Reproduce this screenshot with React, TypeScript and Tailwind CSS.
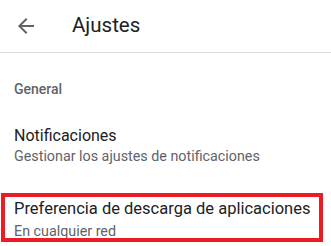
export default function App() {
  return (
    <div className="w-[331px] h-[246px] bg-white overflow-hidden relative" style={{ fontFamily: "Roboto, 'Liberation Sans', sans-serif" }}>
      <div className="h-[53px] flex items-center border-b border-[#dadce0]">
        <button className="ml-[14px] w-6 h-6 flex items-center justify-center text-[#5f6368]">
          <svg width="24" height="24" viewBox="0 0 24 24" fill="currentColor">
            <path d="M20 11H7.83l5.59-5.59L12 4l-8 8 8 8 1.41-1.41L7.83 13H20v-2z" />
          </svg>
        </button>
        <h1 className="ml-[34px] text-[20.5px] leading-[28px] text-[#202124] -mt-[2px]">Ajustes</h1>
      </div>

      <div className="px-[14px] pt-[26px] text-[14px] leading-[20px] font-medium text-[#5f6368]">General</div>

      <div className="px-[14px] pt-[27px]">
        <div className="text-[16px] leading-[20px] text-[#202124]">Notificaciones</div>
        <div className="text-[14.3px] leading-[18px] text-[#5f6368] mt-[1px]">Gestionar los ajustes de notificaciones</div>
      </div>

      <div className="px-[14px] pt-[34px]">
        <div className="text-[16.5px] leading-[20px] text-[#202124]">Preferencia de descarga de aplicaciones</div>
        <div className="text-[14.3px] leading-[18px] text-[#5f6368] mt-[3px]">En cualquier red</div>
      </div>

      <div className="absolute left-[1px] top-[193px] w-[322px] h-[49px] border-4 border-[#ed1c24] pointer-events-none" />
    </div>
  );
}
